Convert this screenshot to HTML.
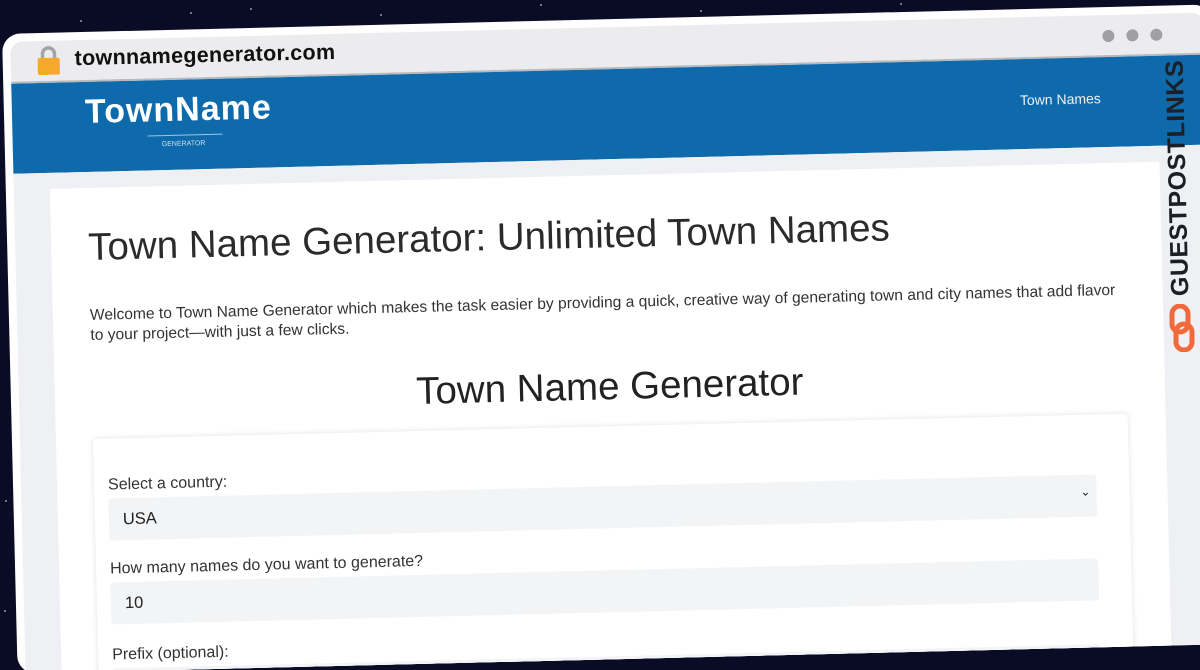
<!DOCTYPE html>
<html><head><meta charset="utf-8"><style>
*{margin:0;padding:0;box-sizing:border-box}
html{width:1200px;height:670px;overflow:hidden}
body{width:1200px;height:670px;overflow:hidden;background:#0a0c26;font-family:"Liberation Sans",Arial,sans-serif;position:relative}
.star{position:absolute;width:2px;height:2px;background:#cfd3ee;border-radius:1px;opacity:.7}
#frame{position:absolute;left:2px;top:34px;width:1210px;height:640px;background:#fff;border-radius:18px;transform-origin:0 0;transform:rotate(-1.4deg);overflow:hidden}
.bar{position:absolute;left:8px;top:8px;right:8px;height:42px;background:#ececee;border-radius:12px 12px 0 0;border-bottom:2px solid #b9babd}
.url{position:absolute;left:64px;top:6px;font-size:21.5px;font-weight:bold;color:#111;letter-spacing:.3px}
.lock{position:absolute;left:26px;top:4px;width:24px;height:30px}
.dots{position:absolute;right:42px;top:14px}
.dots span{display:inline-block;width:12px;height:12px;border-radius:6px;background:#a0a0a3;margin-left:12px}
.blue{position:absolute;left:8px;right:8px;top:50px;height:90px;background:#0f6aab}
.logo{position:absolute;left:73px;top:11px;color:#fff;font-weight:bold;font-size:34px;letter-spacing:1px}
.logo .ln{position:absolute;left:62px;top:44px;width:75px;height:1px;background:#9fc4e2}
.logo .g{position:absolute;left:76px;top:50px;font-size:7px;font-weight:normal;color:#cfe0ef;letter-spacing:0}
.nav{position:absolute;left:1008px;top:33px;color:#e8f1f8;font-size:14px}
.page{position:absolute;left:8px;right:8px;top:140px;bottom:0;background:#eef0f3}
.content{position:absolute;left:36px;top:16px;width:1110px;height:700px;background:#fff}
h1{position:absolute;left:37px;top:38px;font-size:38.5px;font-weight:normal;color:#2b2b2b;white-space:nowrap}
p{position:absolute;left:37px;top:118px;width:1040px;font-size:15.6px;line-height:20px;color:#333}
h2{position:absolute;left:0;width:1110px;text-align:center;top:190px;font-size:38.5px;font-weight:normal;color:#222}
.card{position:absolute;left:37px;top:251px;width:1035px;height:400px;background:#fff;border-radius:4px;box-shadow:0 0 6px rgba(0,0,0,.12)}
.lab{position:absolute;left:14px;font-size:16px;color:#333}
.inp{position:absolute;left:14px;width:988px;height:42px;background:#f3f4f6;border-radius:3px;font-size:16.5px;color:#222;padding:12px 14px}
</style></head><body>
<div class="star" style="left:250px;top:8px"></div><div class="star" style="left:190px;top:12px"></div><div class="star" style="left:540px;top:4px"></div><div class="star" style="left:700px;top:10px"></div><div class="star" style="left:80px;top:20px"></div><div class="star" style="left:900px;top:3px"></div><div class="star" style="left:380px;top:14px"></div><div class="star" style="left:5px;top:500px"></div><div class="star" style="left:4px;top:610px"></div>
<div id="frame">
 <div class="bar">
  <svg class="lock" viewBox="0 0 24 30"><path d="M6 14V9a6 6 0 0 1 12 0v5" fill="none" stroke="#a4a4a6" stroke-width="3.5"/><rect x="1" y="13" width="22" height="17" rx="2" fill="#f6a82a"/></svg>
  <div class="url">townnamegenerator.com</div>
  <div class="dots"><span></span><span></span><span></span></div>
 </div>
 <div class="blue">
  <div class="logo">TownName<div class="ln"></div><div class="g">GENERATOR</div></div>
  <div class="nav">Town Names</div>
 </div>
 <div class="page"><div class="content">
  <h1>Town Name Generator: Unlimited Town Names</h1>
  <p>Welcome to Town Name Generator which makes the task easier by providing a quick, creative way of generating town and city names that add flavor to your project—with just a few clicks.</p>
  <h2>Town Name Generator</h2>
  <div class="card">
   <div class="lab" style="top:38px">Select a country:</div>
   <div class="inp" style="top:60px">USA<span style="position:absolute;right:6px;top:10px;font-size:12px">⌄</span></div>
   <div class="lab" style="top:122px">How many names do you want to generate?</div>
   <div class="inp" style="top:144px">10</div>
   <div class="lab" style="top:208px">Prefix (optional):</div>
   <div class="inp" style="top:230px"></div>
  </div>
 </div></div>
</div>
<div style="position:absolute;left:1178px;top:178px;transform:translate(-50%,-50%) rotate(-91.4deg);font-weight:bold;font-size:25px;color:#1c1f26;white-space:nowrap;letter-spacing:.5px">GUESTPOSTLINKS</div>
<svg style="position:absolute;left:1168px;top:304px" width="28" height="48" viewBox="0 0 28 48"><rect x="4" y="2" width="16" height="26" rx="8" fill="none" stroke="#f26a3b" stroke-width="5"/><rect x="8" y="20" width="16" height="26" rx="8" fill="none" stroke="#f26a3b" stroke-width="5"/></svg>
</body></html>
